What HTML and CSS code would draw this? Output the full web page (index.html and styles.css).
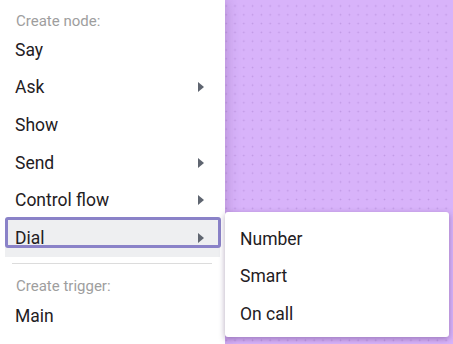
FILE: index.html
```html
<!DOCTYPE html>
<html lang="en">
<head>
  <meta charset="UTF-8">
  <title>Create node menu</title>
  <link rel="stylesheet" href="styles.css">
</head>
<body>

  <div class="menu">
    <div class="menu-label">Create node:</div>
    <div class="menu-item">Say</div>
    <div class="menu-item has-sub">Ask</div>
    <div class="menu-item">Show</div>
    <div class="menu-item has-sub">Send</div>
    <div class="menu-item has-sub">Control flow</div>
    <div class="menu-item has-sub active">
      Dial
      <!-- Dial submenu -->
      <div class="submenu">
        <div class="menu-item">Number</div>
        <div class="menu-item">Smart</div>
        <div class="menu-item">On call</div>
      </div>
    </div>
    <div class="menu-divider"></div>
    <div class="menu-label second">Create trigger:</div>
    <div class="menu-item trigger">Main</div>
  </div>

</body>
</html>
```

FILE: styles.css
```css
body {
  margin: 0;
  height: 100vh;
  overflow: hidden;
  font-family: Roboto, 'Liberation Sans', sans-serif;
  background-color: #d8b3fa;
  background-image: radial-gradient(circle, #bf98e3 0.7px, transparent 1.1px);
  background-size: 8.8px 8.8px;
  background-position: 1.9px 1.6px;
}

.menu {
  width: 225px;
  height: 100%;
  background: #ffffff;
  box-shadow: 0 0 14px rgba(60, 20, 90, 0.28);
  position: relative;
  z-index: 1;
}

.menu-label {
  padding: 11px 16px 0;
  line-height: 20px;
  font-size: 15px;
  color: #9e9e9e;
}

.menu-label.second {
  padding-top: 12px;
}

.menu-item {
  position: relative;
  height: 37.6px;
  display: flex;
  align-items: center;
  padding: 0 21px 0 15px;
  font-size: 17.5px;
  color: #1f2023;
}

.has-sub::after {
  content: "";
  margin-left: auto;
  border-left: 6px solid #5f6570;
  border-top: 5px solid transparent;
  border-bottom: 5px solid transparent;
}

.menu-item.active {
  margin: 0 5px;
  padding: 0 16px 0 10px;
  background: #eeeff1;
}

.menu-item.active::before {
  content: "";
  position: absolute;
  top: -2px;
  left: 0;
  right: -1px;
  height: 31px;
  box-sizing: border-box;
  border: 3px solid #8a82c8;
  border-radius: 3px;
}

.menu-divider {
  height: 1px;
  margin: 6px 13px 0 12px;
  background: #dcdcdc;
}

.trigger {
  margin-top: 2px;
}

.submenu {
  position: absolute;
  top: -7px;
  left: calc(100% + 5px);
  width: 224px;
  padding: 8px 0 4px;
  background: #ffffff;
  border-radius: 3px;
  box-shadow: 0 2px 6px rgba(40, 10, 70, 0.35);
  z-index: 2;
}

.submenu .menu-item {
  padding-left: 15px;
}
```
